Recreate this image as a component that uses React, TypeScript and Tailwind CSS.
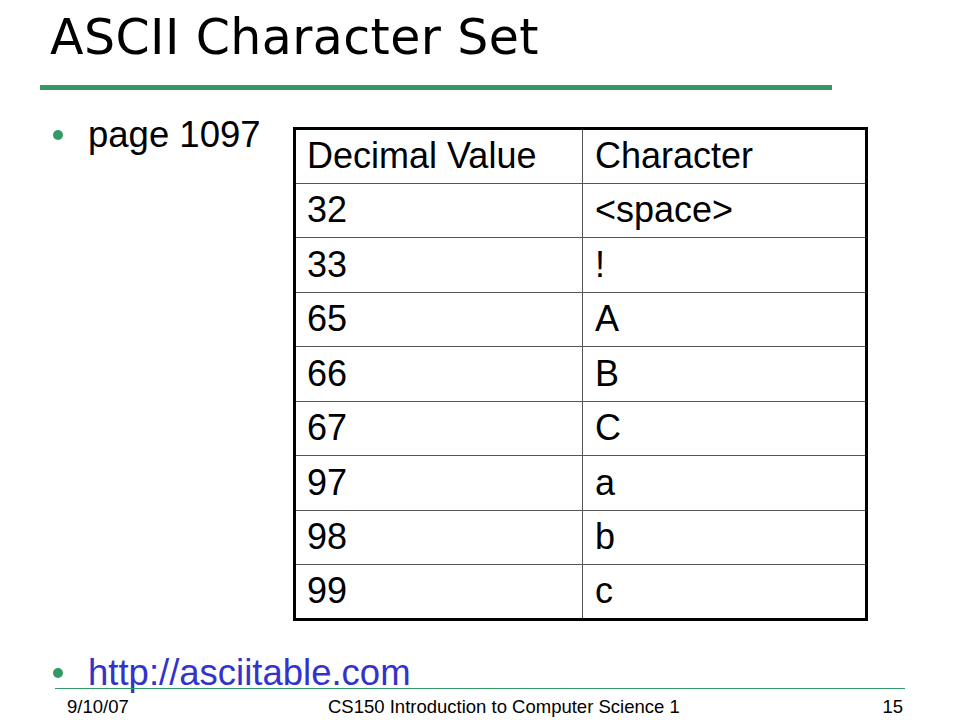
const rows: [string, string][] = [
  ['32', '<space>'],
  ['33', '!'],
  ['65', 'A'],
  ['66', 'B'],
  ['67', 'C'],
  ['97', 'a'],
  ['98', 'b'],
  ['99', 'c'],
];

function Bullet() {
  return <span className="inline-block w-[10px] h-[10px] rounded-full bg-[#339966] shrink-0" />;
}

export default function App() {
  return (
    <div className="w-[960px] h-[720px] bg-white text-black flex flex-col font-['Liberation_Sans',Arial,sans-serif]">
      {/* titulo */}
      <header className="pt-[12px]">
        <h1 className="pl-[50px] h-[56px] text-[49px] leading-[52px] tracking-[0.4px] font-['DejaVu_Sans',Verdana,sans-serif]">
          ASCII Character Set
        </h1>
        <div className="ml-[40px] mt-[17px] w-[792px] h-[5px] bg-[#339966]" />
      </header>

      <main className="flex-1 flex flex-col">
        <div className="flex pt-[27px]">
          <div className="w-[293px] pl-[53px] flex items-center gap-[25px] h-[36px] self-start">
            <Bullet />
            <span className="text-[36.5px] leading-none">page 1097</span>
          </div>
          <table className="mt-[10px] w-[575px] border-collapse border-[3px] border-black text-[36px]">
            <tbody>
              <tr className="h-[54.5px]">
                <td className="w-[288px] border border-[#555] pl-[11px] leading-none">Decimal Value</td>
                <td className="border border-[#555] pl-[12px] leading-none">Character</td>
              </tr>
              {rows.map(([dec, ch]) => (
                <tr key={dec} className="h-[54.5px]">
                  <td className="border border-[#555] pl-[11px] leading-none">{dec}</td>
                  <td className="border border-[#555] pl-[12px] leading-none">{ch}</td>
                </tr>
              ))}
            </tbody>
          </table>
        </div>

        <div className="mt-auto pl-[53px] flex items-center gap-[25px] h-[30px]">
          <Bullet />
          <span className="text-[36.5px] leading-none text-[#3333cc]">http://asciitable.com</span>
        </div>
      </main>

      {/* pie */}
      <footer>
        <div className="ml-[55px] w-[850px] h-px bg-[#339966]" />
        <div className="flex items-center pl-[67px] pr-[57px] pt-[4px] h-[31px] text-[18.5px]">
          <span className="w-[261px]">9/10/07</span>
          <span>CS150 Introduction to Computer Science 1</span>
          <span className="ml-auto">15</span>
        </div>
      </footer>
    </div>
  );
}
